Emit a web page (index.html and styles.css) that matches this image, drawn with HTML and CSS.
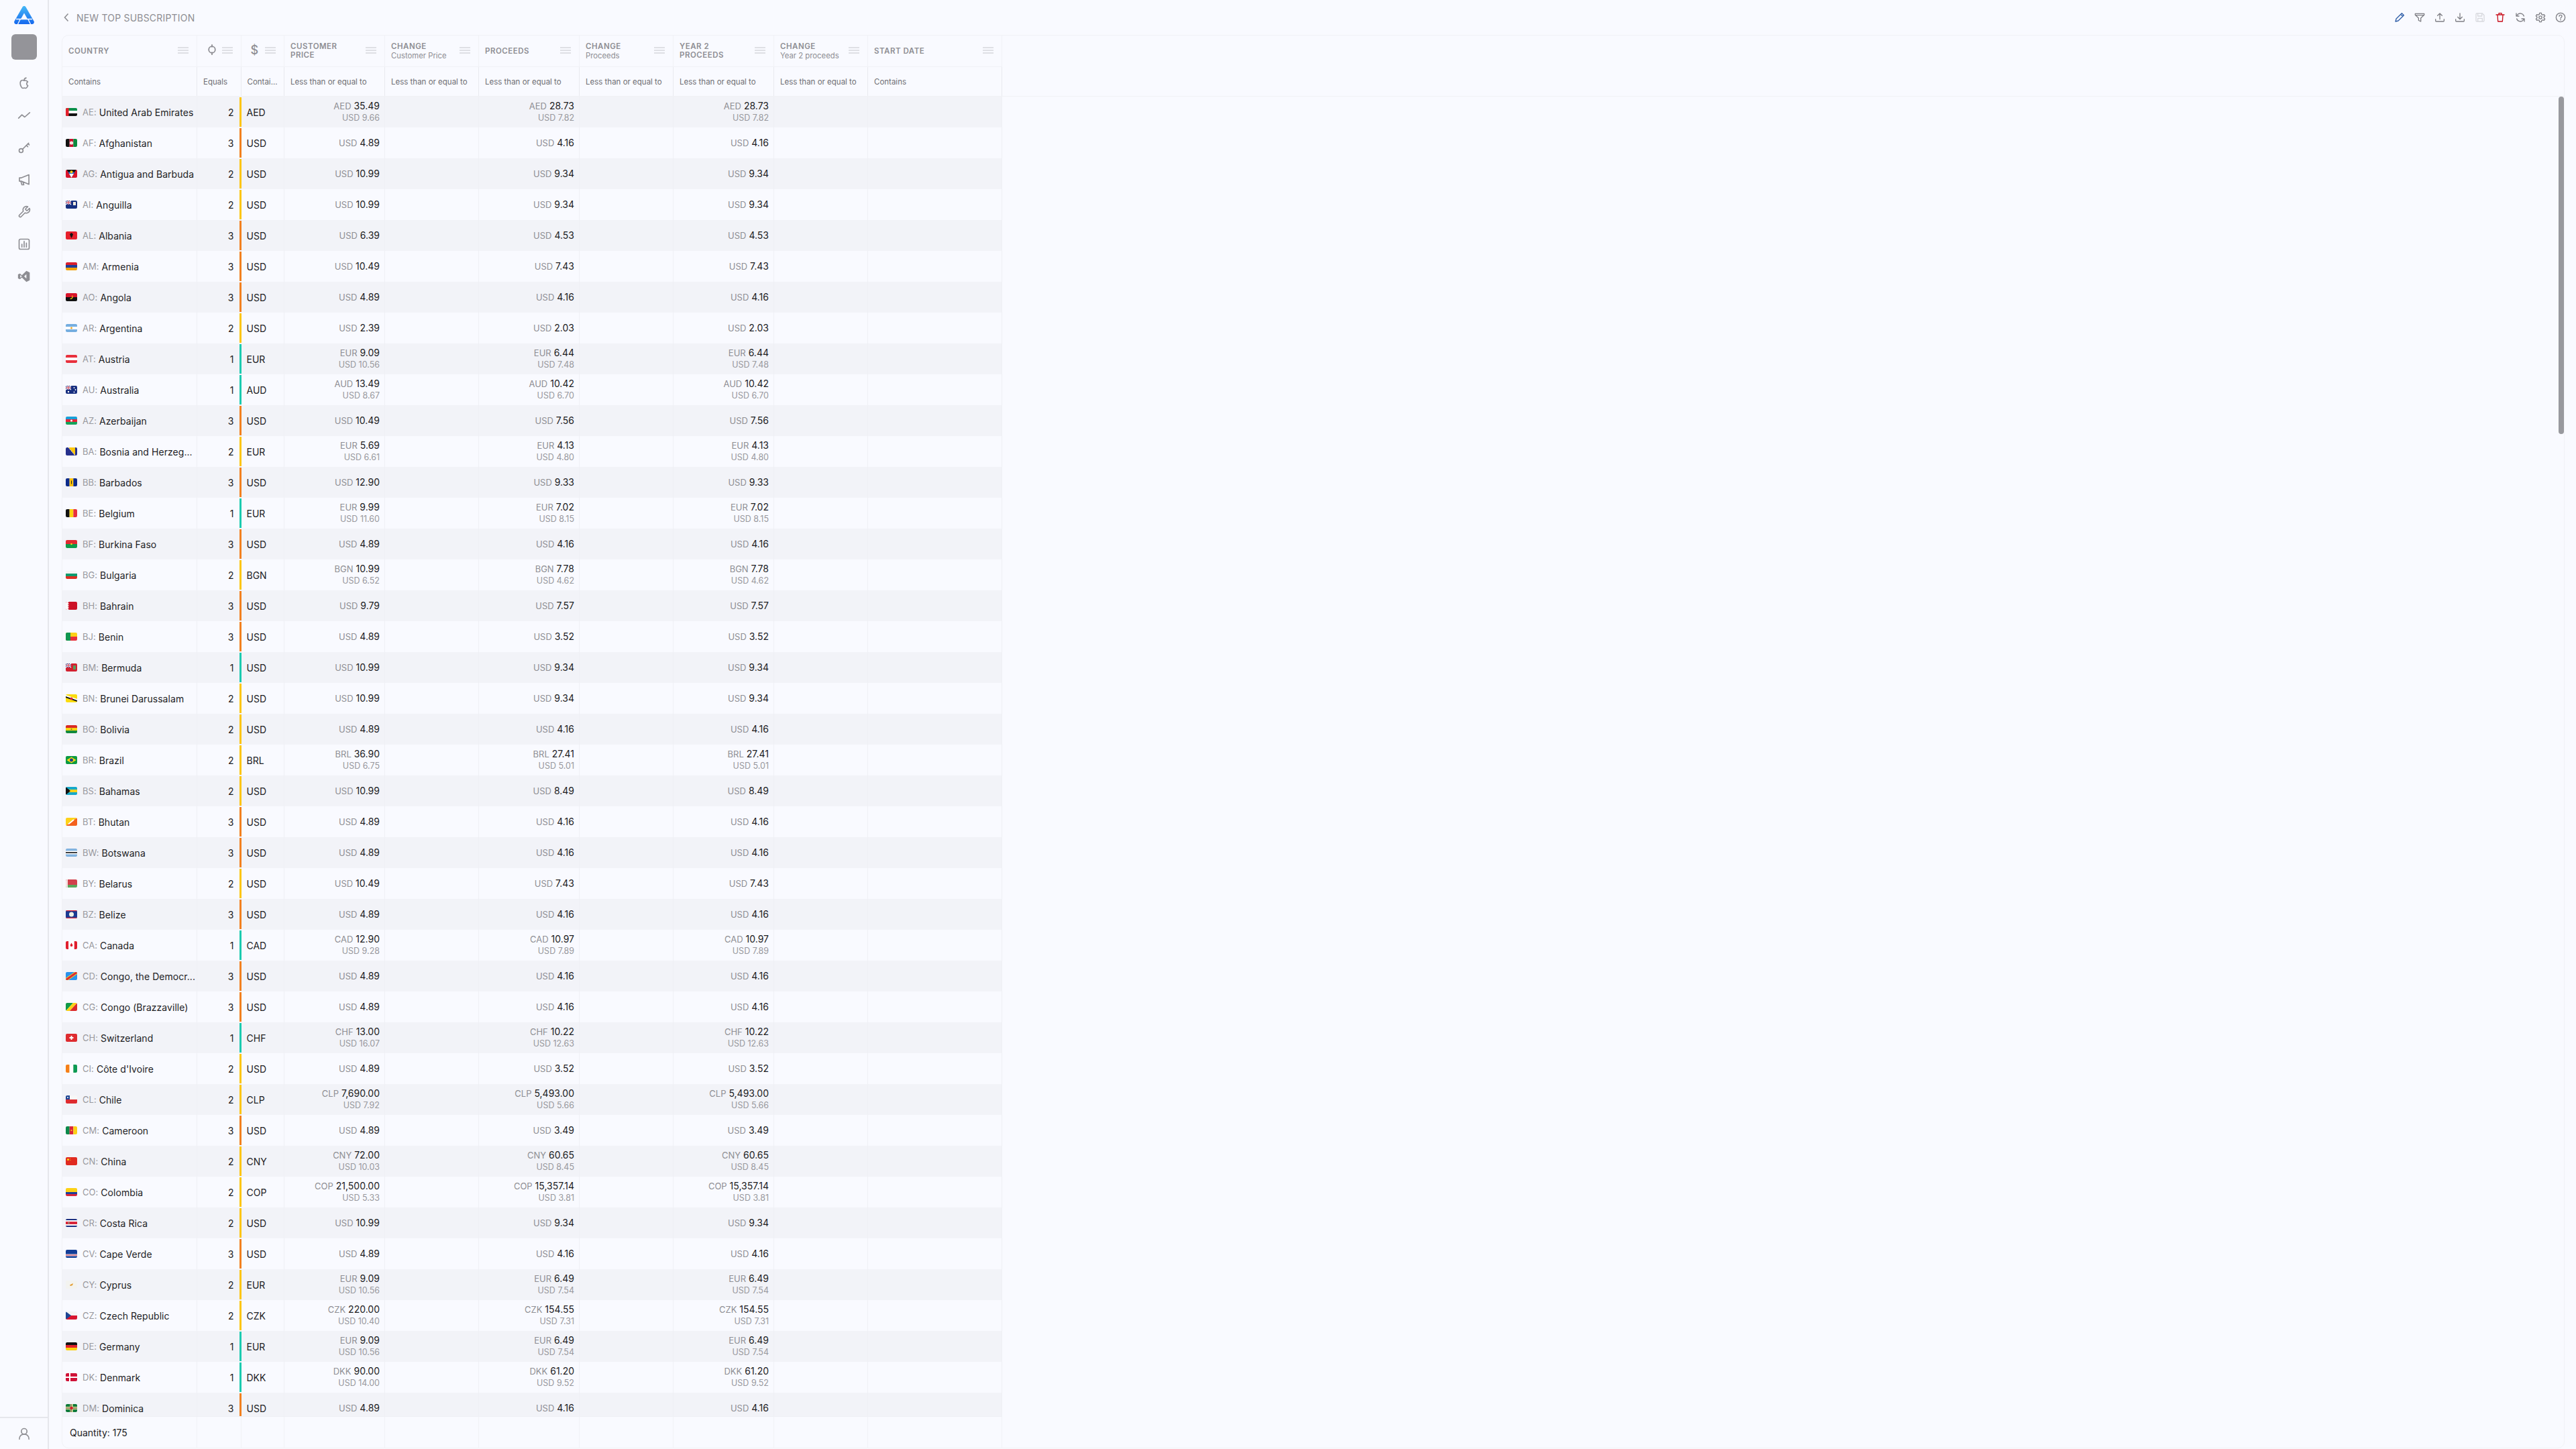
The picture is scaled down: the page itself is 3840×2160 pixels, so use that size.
FILE: index.html
```html
<!DOCTYPE html>
<html lang="en">
<head>
  <meta charset="UTF-8">
  <title>New Top Subscription</title>
  <link rel="stylesheet" href="styles.css">
</head>
<body>
<div class="app">
  <aside class="sidebar">
    <svg class="logo" viewBox="0 0 30 27">
      <defs>
        <linearGradient id="logoBlue" x1="0" y1="0" x2="0" y2="1">
          <stop offset="0" stop-color="#45b8f6"/>
          <stop offset="1" stop-color="#1668ee"/>
        </linearGradient>
      </defs>
      <path d="M15 0c1 0 2 .5 2.500 1.500L29.500 22.500c1 2 0 4.500-2.500 4.500H3c-2.500 0-3.500-2.500-2.500-4.500L12.500 1.500C13 .5 14 0 15 0z" fill="url(#logoBlue)"/>
      <path d="M15 10.500L19.800 19H10.200z" fill="#f9faff"/>
      <path d="M9.500 19L5.500 27M20.500 19L24.500 27M3 19.500H27" stroke="#f9faff" stroke-width="1.300" fill="none"/>
    </svg>
    <div class="avatar"></div>
    <nav class="side-nav">
      <svg viewBox="0 0 24 24"><path d="M12 7.500c-2-1.500-7-1.500-7 4.500 0 4.500 2.500 9 5 9 1 0 1.300-.6 2.200-.6s1.200.6 2.200.6c1.700 0 3.200-2 4.300-4.500-3-1.500-3-5.500-.2-7-2-2.500-4.500-2.500-6.500-2zM12 7c0-2 1-4 3.500-4.500"/></svg>
      <svg viewBox="0 0 24 24"><path d="M2 17l6-6 5 4 9-8"/></svg>
      <svg viewBox="0 0 24 24"><circle cx="6.500" cy="17.500" r="3.500"/><path d="M9 15L20 4M16 8l2.500 2.500M19 5l2 2"/></svg>
      <svg viewBox="0 0 24 24"><path d="M20.500 3L7 8.500H3.500v6H7l13.500 5.500zM6 14.500L8 21h3.500l-2-5.500"/></svg>
      <svg viewBox="0 0 24 24"><path d="M14.700 6.300a1 1 0 0 0 0 1.400l1.600 1.600a1 1 0 0 0 1.400 0l3.770-3.770a6 6 0 0 1-7.940 7.940l-6.910 6.910a2.120 2.120 0 0 1-3-3l6.910-6.910a6 6 0 0 1 7.940-7.940z"/></svg>
      <svg viewBox="0 0 24 24"><rect x="3" y="3" width="18" height="18" rx="2.500"/><path d="M8 17v-5M12 17V7M16 17v-7"/></svg>
      <svg class="solid" viewBox="0 0 24 24"><path d="M16 2l6 3v14l-6 3-8-8-3.500 3L1 15.500V8.500L4.500 7 8 10zM5 9.500v5l3-2.500zM16 8l-4 4 4 4z"/></svg>
    </nav>
    <div class="side-user">
      <svg viewBox="0 0 24 24"><circle cx="12" cy="8" r="5"/><path d="M3.500 22c0-5.500 3.500-9 8.500-9s8.500 3.500 8.500 9"/></svg>
    </div>
  </aside>

  <main class="content">
    <header class="topbar">
      <div class="crumb">
        <svg class="back" viewBox="0 0 8 14"><path d="M6.500 1.500L1.500 7l5 5.500"/></svg>
        <span>NEW TOP SUBSCRIPTION</span>
      </div>
      <div class="tools">
        <svg class="tool-blue" viewBox="0 0 24 24"><path d="M3 21l1.500-6L17 2.500 21.500 7 9 19.500zM14.500 5l4.500 4.500"/></svg>
        <svg viewBox="0 0 24 24"><path d="M2 3.500h20v3l-7.500 7V21l-5-2.500v-5L2 6.500zM2.500 7h19"/></svg>
        <svg viewBox="0 0 24 24"><path d="M12 16V3M7 8l5-5 5 5M2.500 16v3.500c0 1 .5 1.500 1.500 1.500h16c1 0 1.500-.5 1.500-1.500V16"/></svg>
        <svg viewBox="0 0 24 24"><path d="M12 3v13M7 11l5 5 5-5M2.500 16v3.500c0 1 .5 1.500 1.500 1.500h16c1 0 1.500-.5 1.500-1.500V16"/></svg>
        <svg class="tool-off" viewBox="0 0 24 24"><path d="M3 5c0-1 1-2 2-2h12l4 4v12c0 1-1 2-2 2H5c-1 0-2-1-2-2zM7 3v6h9V3M7 21v-7h10v7"/></svg>
        <svg class="tool-red" viewBox="0 0 24 24"><path d="M3 6h18M6 6l1 15h10l1-15M9 6V2.500h6V6"/></svg>
        <svg viewBox="0 0 24 24"><path d="M20 9A8.500 8.500 0 0 0 5 6.500L3 9M3 3v6h6M4 15a8.500 8.500 0 0 0 15 2.500l2-2.500M21 21v-6h-6"/></svg>
        <svg viewBox="0 0 24 24"><circle cx="12" cy="12" r="3.200"/><path d="M10 2h4l.6 3 2.500 1.400 2.900-1 2 3.400-2.300 2v2.400l2.300 2-2 3.400-2.900-1-2.500 1.400-.6 3h-4l-.6-3-2.500-1.400-2.900 1-2-3.400 2.300-2v-2.400l-2.300-2 2-3.400 2.900 1L9.400 5z"/></svg>
        <svg viewBox="0 0 24 24"><circle cx="12" cy="12" r="10"/><path d="M9 9.500c0-4 6-4 6 0 0 2.500-3 2.500-3 4.500M12 16.500v1.500"/></svg>
      </div>
    </header>

    <section class="table">
      <div class="thead">
        <div class="row-cols head-row">
          <div class="th"><span class="th-title">COUNTRY</span><i class="menu"></i></div>
          <div class="th">
            <svg class="th-icon" viewBox="0 0 16 18"><circle cx="8" cy="9" r="5.500"/><path d="M8 0v5M8 13v5"/></svg>
            <i class="menu"></i>
          </div>
          <div class="th"><span class="th-dollar">$</span><i class="menu"></i></div>
          <div class="th"><span class="th-title">CUSTOMER<br>PRICE</span><i class="menu"></i></div>
          <div class="th"><span class="th-title">CHANGE<small>Customer Price</small></span><i class="menu"></i></div>
          <div class="th"><span class="th-title">PROCEEDS</span><i class="menu"></i></div>
          <div class="th"><span class="th-title">CHANGE<small>Proceeds</small></span><i class="menu"></i></div>
          <div class="th"><span class="th-title">YEAR 2<br>PROCEEDS</span><i class="menu"></i></div>
          <div class="th"><span class="th-title">CHANGE<small>Year 2 proceeds</small></span><i class="menu"></i></div>
          <div class="th"><span class="th-title">START DATE</span><i class="menu"></i></div>
        </div>
        <div class="row-cols filter-row">
          <div class="tf">Contains</div>
          <div class="tf">Equals</div>
          <div class="tf">Contai...</div>
          <div class="tf">Less than or equal to</div>
          <div class="tf">Less than or equal to</div>
          <div class="tf">Less than or equal to</div>
          <div class="tf">Less than or equal to</div>
          <div class="tf">Less than or equal to</div>
          <div class="tf">Less than or equal to</div>
          <div class="tf">Contains</div>
        </div>
      </div>

      <div class="tbody" id="rows"></div>
      <div class="scroll-thumb"></div>

      <div class="row-cols tfoot">
        <div class="foot-total">Quantity: 175</div>
        <div></div><div></div><div></div><div></div><div></div><div></div><div></div><div></div><div></div>
      </div>
    </section>
  </main>
</div>
<script src="app.js"></script>
</body>
</html>
```

FILE: styles.css
```css
* { box-sizing: border-box; margin: 0; padding: 0; }
html, body { height: 100%; }
body {
  font-family: Inter, "Noto Sans", sans-serif;
  background: #f9faff;
  color: #1d1d1f;
  overflow: hidden;
}
.app {
  display: flex;
  height: 2160px;
}

/* sidebar */
.sidebar {
  width: 73px;
  flex: none;
  display: flex;
  flex-direction: column;
  align-items: center;
  border-right: 2px solid #e6e7ec;
}
.logo {
  width: 30px;
  height: 27px;
  margin-top: 9px;
}
.avatar {
  width: 38px;
  height: 38px;
  margin-top: 15px;
  border-radius: 6px;
  background: #949499;
}
.side-nav {
  display: flex;
  flex-direction: column;
  align-items: center;
  gap: 28px;
  margin-top: 25px;
  flex: 1;
}
.side-nav svg, .side-user svg {
  width: 20px;
  height: 20px;
  fill: none;
  stroke: #8e8e93;
  stroke-width: 2;
  stroke-linejoin: round;
  stroke-linecap: round;
}
.side-nav svg.solid {
  fill: #8e8e93;
  stroke: none;
}
.side-user {
  width: 100%;
  height: 48px;
  border-top: 2px solid #e6e7ec;
  display: flex;
  align-items: center;
  justify-content: center;
}

/* top bar */
.content {
  flex: 1;
  min-width: 0;
  display: flex;
  flex-direction: column;
  padding: 0 17px 1px 19px;
}
.topbar {
  height: 52px;
  flex: none;
  display: flex;
  align-items: center;
  justify-content: space-between;
}
.crumb {
  display: flex;
  align-items: center;
  gap: 11px;
  padding-left: 3px;
  color: #8e8e93;
  font-size: 14px;
  letter-spacing: .2px;
}
.back {
  width: 8px;
  height: 14px;
  fill: none;
  stroke: #8e8e93;
  stroke-width: 1.6;
}
.tools {
  display: flex;
  gap: 14px;
  margin-right: -2px;
}
.tools svg {
  width: 16px;
  height: 16px;
  fill: none;
  stroke: #7f7f85;
  stroke-width: 2;
  stroke-linejoin: round;
  stroke-linecap: round;
}
.tools .tool-blue { stroke: #2f5ea8; }
.tools .tool-red { stroke: #c8101e; }
.tools .tool-off { stroke: #d8d9de; }

/* table */
.table {
  flex: 1;
  min-height: 0;
  position: relative;
  display: flex;
  flex-direction: column;
  border: 1px solid #f1f2f6;
  border-radius: 10px;
}
.row-cols {
  display: grid;
  grid-template-columns: 201px 65.500px 64.500px 150px 140px 150px 140px 150px 140px 200px;
  width: 1401px;
}
.thead {
  flex: none;
  border-bottom: 1px solid #f0f1f5;
}
.head-row { height: 46px; }
.filter-row { height: 44px; border-top: 1px solid #f1f2f6; }
.th {
  display: flex;
  align-items: center;
  justify-content: space-between;
  padding: 0 12px 0 9px;
  border-right: 1px solid #f1f2f6;
  color: #8e8e93;
}
.th-title {
  font-size: 11.500px;
  font-weight: 600;
  line-height: 13px;
  letter-spacing: .5px;
}
.th-title small {
  display: block;
  margin-top: 1px;
  font-size: 11.300px;
  font-weight: 400;
  letter-spacing: 0;
}
.th-icon {
  width: 14px;
  height: 16px;
  margin-left: 6px;
  margin-top: -4px;
  fill: none;
  stroke: #8e8e93;
  stroke-width: 2;
}
.th-dollar {
  margin-left: 5px;
  margin-top: -4px;
  font-size: 18px;
  font-weight: 500;
}
.menu {
  width: 16px;
  height: 10px;
  margin-top: -2px;
  border-top: 2px solid #dfe0e5;
  border-bottom: 2px solid #dfe0e5;
  background: linear-gradient(#dfe0e5, #dfe0e5) center / 100% 2px no-repeat;
}
.tf {
  display: flex;
  align-items: center;
  padding-left: 9px;
  border-right: 1px solid #e9eaef;
  font-size: 11.500px;
  color: #6e6e73;
  white-space: nowrap;
}

.tbody {
  flex: 1;
  min-height: 0;
  overflow: hidden;
}
.tr { height: 46px; }
.tr:nth-child(odd) { background: #f2f3f8; }
.td {
  display: flex;
  align-items: center;
  min-width: 0;
  border-right: 1px solid #eff0f5;
  font-size: 14px;
}
.country { padding-left: 5px; white-space: nowrap; letter-spacing: .05px; }
.flag {
  width: 17px;
  height: 12px;
  flex: none;
  border-radius: 2px;
}
.iso {
  margin-left: 8px;
  margin-right: 4px;
  font-size: 13px;
  color: #98989d;
}
.tier { justify-content: flex-end; align-items: stretch; border-right: 0; }
.tier b {
  align-self: center;
  font-weight: 400;
  margin-right: 8px;
}
.tier i {
  width: 3px;
  margin: 1px 0;
}
.t1 i { background: #1ccbb0; }
.t2 i { background: #fdc50d; }
.t3 i { background: #f2801f; }
.currency { padding-left: 8px; }
.money {
  flex-direction: column;
  align-items: flex-end;
  justify-content: center;
  padding-right: 7px;
  line-height: 18px;
}
.money span { color: #8e8e93; font-size: 13px; }
.money .sub { color: #98989d; font-size: 12.500px; }

.scroll-thumb {
  position: absolute;
  top: 91px;
  right: 0;
  width: 8px;
  height: 503px;
  border-radius: 4px;
  background: #98999e;
}
.tfoot {
  flex: none;
  height: 47px;
  border-top: 1px solid #eff0f5;
}
.tfoot > div { border-right: 1px solid #f1f2f6; }
.foot-total {
  display: flex;
  align-items: center;
  padding-left: 11px;
  font-size: 14px;
  white-space: nowrap;
}
```

FILE: app.js
```js
// stripes helpers for the little flags, viewBox is 17 x 12
function h(colors) {
  const step = 12 / colors.length;
  return colors.map((c, i) => `<rect y="${i * step}" width="17" height="${step}" fill="${c}"/>`).join("");
}
function v(colors) {
  const step = 17 / colors.length;
  return colors.map((c, i) => `<rect x="${i * step}" width="${step}" height="12" fill="${c}"/>`).join("");
}
function box(x, y, w, ht, c) {
  return `<rect x="${x}" y="${y}" width="${w}" height="${ht}" fill="${c}"/>`;
}
function poly(points, c) {
  return `<polygon points="${points}" fill="${c}"/>`;
}
function dot(x, y, r, c) {
  return `<circle cx="${x}" cy="${y}" r="${r}" fill="${c}"/>`;
}
// small union jack for the top left corner
const canton = box(0, 0, 8, 6, "#1f3a8c") +
  '<path d="M0 0L8 6M8 0L0 6" stroke="#fff" stroke-width="1.200"/>' +
  box(3.300, 0, 1.400, 6, "#fff") + box(0, 2.300, 8, 1.400, "#fff") +
  box(3.600, 0, .8, 6, "#d8263a") + box(0, 2.600, 8, .8, "#d8263a");

const flags = {
  AE: h(["#0a8f4a", "#fff", "#111"]) + box(0, 0, 4.500, 12, "#e4202c"),
  AF: v(["#111", "#c8102e", "#0a8a3f"]) + dot(8.500, 6, 2.600, "#f3e6e0"),
  AG: box(0, 0, 17, 12, "#d9142b") + poly("1.500,0 15.500,0 8.500,12", "#111") + poly("3.600,3.600 13.400,3.600 12,6 5,6", "#2a6dd0") + poly("5,6 12,6 8.500,12", "#fff") + dot(8.500, 3.200, 2, "#fbc80f"),
  AI: box(0, 0, 17, 12, "#17307f") + canton + box(11, 2, 4, 5, "#f8efe0"),
  AL: box(0, 0, 17, 12, "#e61f2b") + poly("8.500,2 11,4 10,7 8.500,10 7,7 6,4", "#111"),
  AM: h(["#d9202e", "#1f3f98", "#f4a30b"]),
  AO: h(["#d8142a", "#111"]) + '<path d="M6.500 8.500c3 0 4.500-2 3-5" stroke="#f7c90c" stroke-width="1.200" fill="none"/>',
  AR: h(["#75aee0", "#fff", "#75aee0"]) + dot(8.500, 6, 1.400, "#e9a11a"),
  AT: h(["#e8303c", "#fff", "#e8303c"]),
  AU: box(0, 0, 17, 12, "#182f80") + canton + dot(12.500, 3, .9, "#fff") + dot(14.500, 6, .9, "#fff") + dot(12.500, 9.500, .9, "#fff") + dot(4, 9, 1.200, "#fff"),
  AZ: h(["#19a0d8", "#e5253a", "#14a35a"]) + dot(8.500, 6, 1.500, "#fff"),
  BA: box(0, 0, 17, 12, "#26308c") + poly("4,0 14,0 14,12", "#fcc70d") + '<path d="M4 0L14 12" stroke="#fff" stroke-width="1" stroke-dasharray="1.200 1"/>',
  BB: v(["#0b2a8a", "#fcc20e", "#0b2a8a"]) + box(8, 3.500, 1, 5, "#222"),
  BE: v(["#111", "#fbd20f", "#e8303c"]),
  BF: h(["#e12a30", "#0d9c4b"]) + dot(8.500, 6, 1.300, "#fcd116"),
  BG: h(["#f4f4f2", "#0f9a6d", "#de2f22"]),
  BH: box(0, 0, 17, 12, "#cc1126") + poly("0,0 5,0 3,1.500 5,3 3,4.500 5,6 3,7.500 5,9 3,10.500 5,12 0,12", "#f9f9f9"),
  BJ: box(0, 0, 17, 6, "#fcd116") + box(0, 6, 17, 6, "#e8303c") + box(0, 0, 7, 12, "#10964f"),
  BM: box(0, 0, 17, 12, "#d2202f") + canton + box(11, 3, 4, 6, "#5d9a5a"),
  BN: box(0, 0, 17, 12, "#fbdc0e") + poly("0,1 17,7 17,10 0,4", "#fff") + poly("0,3 17,9 17,11 0,5", "#111") + dot(8.500, 6.500, 2, "#d8263a"),
  BO: h(["#d92a23", "#f6d40f", "#128a3d"]) + dot(8.500, 6, 1, "#7a6a2c"),
  BR: box(0, 0, 17, 12, "#0c9a43") + poly("8.500,1.500 15.500,6 8.500,10.500 1.500,6", "#fcd80e") + dot(8.500, 6, 2.500, "#1d3f91"),
  BS: h(["#16a9c9", "#fbd21b", "#16a9c9"]) + poly("0,0 7,6 0,12", "#111"),
  BT: poly("0,0 17,0 0,12", "#fdd21a") + poly("17,0 17,12 0,12", "#f3611e") + '<path d="M4 9.500L12 3" stroke="#fff" stroke-width="1.800"/>',
  BW: h(["#74abdc", "#74abdc", "#fff", "#111", "#fff", "#74abdc", "#74abdc"]),
  BY: box(0, 0, 17, 8, "#d2414c") + box(0, 8, 17, 4, "#5aa85c") + box(0, 0, 3, 12, "#f5e3e3"),
  BZ: box(0, 0, 17, 12, "#1a3b93") + box(0, 0, 17, 1.200, "#d8263a") + box(0, 10.800, 17, 1.200, "#d8263a") + dot(8.500, 6, 3.500, "#eef2e6"),
  CA: v(["#e01f2d", "#fff", "#fff", "#e01f2d"]) + poly("8.500,2.500 10.500,6 9.500,8 7.500,8 6.500,6", "#e01f2d"),
  CD: box(0, 0, 17, 12, "#2a92ec") + poly("0,12 0,9 13,0 17,0 17,3 4,12", "#fcd116") + poly("0,12 0,10.300 14.500,0 17,0 17,1.700 2.500,12", "#d8263a"),
  CG: poly("0,0 11,0 0,12", "#0f9a48") + poly("11,0 17,0 6,12 0,12", "#fcd116") + poly("17,0 17,12 6,12", "#dc2a2a"),
  CH: box(0, 0, 17, 12, "#de2b2f") + box(7.500, 3, 2, 6, "#fff") + box(5.500, 5, 6, 2, "#fff"),
  CI: v(["#f57f17", "#fff", "#0d9a53"]),
  CL: box(0, 0, 17, 6, "#f7f7f7") + box(0, 6, 17, 6, "#de2b2f") + box(0, 0, 6, 6, "#1d4593") + dot(3, 3, 1, "#fff"),
  CM: v(["#0a8a4a", "#d8263a", "#fcd116"]) + dot(8.500, 6, 1.100, "#fcd116"),
  CN: box(0, 0, 17, 12, "#e02a20") + dot(3.500, 3.500, 1.500, "#fcdc0e") + dot(6.500, 2, .5, "#fcdc0e") + dot(7, 4.500, .5, "#fcdc0e"),
  CO: box(0, 0, 17, 6, "#fcd116") + box(0, 6, 17, 3, "#1d3f9a") + box(0, 9, 17, 3, "#d8263a"),
  CR: box(0, 0, 17, 12, "#fff") + box(0, 0, 17, 2, "#1b2f7f") + box(0, 10, 17, 2, "#1b2f7f") + box(0, 4, 17, 4, "#d8263a") + dot(4.500, 6, 1.200, "#7fb08e"),
  CV: box(0, 0, 17, 12, "#123d96") + box(0, 6.500, 17, 3, "#f2f2f2") + box(0, 7.500, 17, 1, "#d8263a"),
  CY: box(0, 0, 17, 12, "#f3f3ef") + poly("6,6.500 11,4 10,7 7,8", "#e49b2c"),
  CZ: box(0, 0, 17, 6, "#f3f3f3") + box(0, 6, 17, 6, "#d8142e") + poly("0,0 8,6 0,12", "#1d4593"),
  DE: h(["#111", "#e2222a", "#fcd20e"]),
  DK: box(0, 0, 17, 12, "#cf1238") + box(5, 0, 2, 12, "#fff") + box(0, 5, 17, 2, "#fff"),
  DM: box(0, 0, 17, 12, "#0f7a3a") + box(6.500, 0, 4, 12, "#f2e9a0") + box(0, 4, 17, 4, "#f2e9a0") + box(7.500, 0, 1, 12, "#222") + box(0, 5.500, 17, 1, "#222") + dot(8.500, 6, 2.300, "#d0202c")
};

// code, name, tier, currency, price, price in USD, proceeds, proceeds in USD
const rows = [
  ["AE", "United Arab Emirates", 2, "AED", "35.49", "9.66", "28.73", "7.82"],
  ["AF", "Afghanistan", 3, "USD", "4.89", "", "4.16", ""],
  ["AG", "Antigua and Barbuda", 2, "USD", "10.99", "", "9.34", ""],
  ["AI", "Anguilla", 2, "USD", "10.99", "", "9.34", ""],
  ["AL", "Albania", 3, "USD", "6.39", "", "4.53", ""],
  ["AM", "Armenia", 3, "USD", "10.49", "", "7.43", ""],
  ["AO", "Angola", 3, "USD", "4.89", "", "4.16", ""],
  ["AR", "Argentina", 2, "USD", "2.39", "", "2.03", ""],
  ["AT", "Austria", 1, "EUR", "9.09", "10.56", "6.44", "7.48"],
  ["AU", "Australia", 1, "AUD", "13.49", "8.67", "10.42", "6.70"],
  ["AZ", "Azerbaijan", 3, "USD", "10.49", "", "7.56", ""],
  ["BA", "Bosnia and Herzeg...", 2, "EUR", "5.69", "6.61", "4.13", "4.80"],
  ["BB", "Barbados", 3, "USD", "12.90", "", "9.33", ""],
  ["BE", "Belgium", 1, "EUR", "9.99", "11.60", "7.02", "8.15"],
  ["BF", "Burkina Faso", 3, "USD", "4.89", "", "4.16", ""],
  ["BG", "Bulgaria", 2, "BGN", "10.99", "6.52", "7.78", "4.62"],
  ["BH", "Bahrain", 3, "USD", "9.79", "", "7.57", ""],
  ["BJ", "Benin", 3, "USD", "4.89", "", "3.52", ""],
  ["BM", "Bermuda", 1, "USD", "10.99", "", "9.34", ""],
  ["BN", "Brunei Darussalam", 2, "USD", "10.99", "", "9.34", ""],
  ["BO", "Bolivia", 2, "USD", "4.89", "", "4.16", ""],
  ["BR", "Brazil", 2, "BRL", "36.90", "6.75", "27.41", "5.01"],
  ["BS", "Bahamas", 2, "USD", "10.99", "", "8.49", ""],
  ["BT", "Bhutan", 3, "USD", "4.89", "", "4.16", ""],
  ["BW", "Botswana", 3, "USD", "4.89", "", "4.16", ""],
  ["BY", "Belarus", 2, "USD", "10.49", "", "7.43", ""],
  ["BZ", "Belize", 3, "USD", "4.89", "", "4.16", ""],
  ["CA", "Canada", 1, "CAD", "12.90", "9.28", "10.97", "7.89"],
  ["CD", "Congo, the Democr...", 3, "USD", "4.89", "", "4.16", ""],
  ["CG", "Congo (Brazzaville)", 3, "USD", "4.89", "", "4.16", ""],
  ["CH", "Switzerland", 1, "CHF", "13.00", "16.07", "10.22", "12.63"],
  ["CI", "Côte d'Ivoire", 2, "USD", "4.89", "", "3.52", ""],
  ["CL", "Chile", 2, "CLP", "7,690.00", "7.92", "5,493.00", "5.66"],
  ["CM", "Cameroon", 3, "USD", "4.89", "", "3.49", ""],
  ["CN", "China", 2, "CNY", "72.00", "10.03", "60.65", "8.45"],
  ["CO", "Colombia", 2, "COP", "21,500.00", "5.33", "15,357.14", "3.81"],
  ["CR", "Costa Rica", 2, "USD", "10.99", "", "9.34", ""],
  ["CV", "Cape Verde", 3, "USD", "4.89", "", "4.16", ""],
  ["CY", "Cyprus", 2, "EUR", "9.09", "10.56", "6.49", "7.54"],
  ["CZ", "Czech Republic", 2, "CZK", "220.00", "10.40", "154.55", "7.31"],
  ["DE", "Germany", 1, "EUR", "9.09", "10.56", "6.49", "7.54"],
  ["DK", "Denmark", 1, "DKK", "90.00", "14.00", "61.20", "9.52"],
  ["DM", "Dominica", 3, "USD", "4.89", "", "4.16", ""]
];

function money(cur, value, usd) {
  const sub = usd ? `<div class="sub">USD ${usd}</div>` : "";
  return `<div class="td money"><div><span>${cur}</span> ${value}</div>${sub}</div>`;
}

document.getElementById("rows").innerHTML = rows.map(r => {
  const [code, name, tier, cur, price, priceUsd, proceeds, proceedsUsd] = r;
  return `<div class="row-cols tr">
    <div class="td country">
      <svg class="flag" viewBox="0 0 17 12">${flags[code]}</svg>
      <span class="iso">${code}:</span><span class="name">${name}</span>
    </div>
    <div class="td tier t${tier}"><b>${tier}</b><i></i></div>
    <div class="td currency">${cur}</div>
    ${money(cur, price, priceUsd)}
    <div class="td"></div>
    ${money(cur, proceeds, proceedsUsd)}
    <div class="td"></div>
    ${money(cur, proceeds, proceedsUsd)}
    <div class="td"></div>
    <div class="td"></div>
  </div>`;
}).join("");
```
